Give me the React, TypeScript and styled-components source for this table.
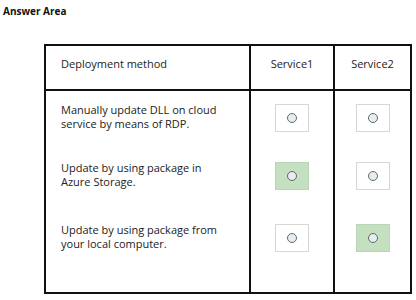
import React from "react";
import styled, { createGlobalStyle } from "styled-components";

const GlobalStyle = createGlobalStyle`
  html, body {
    margin: 0;
    padding: 0;
    background: #ffffff;
  }
  body {
    font-family: "Open Sans", "Liberation Sans", sans-serif;
    color: #222222;
  }
`;

type Choice = { text: string[]; answer: 0 | 1 | 2 };

const rows: Choice[] = [
  { text: ["Manually update DLL on cloud", "service by means of RDP."], answer: 0 },
  { text: ["Update by using package in", "Azure Storage."], answer: 1 },
  { text: ["Update by using package from", "your local computer."], answer: 2 },
];

const rowHeights = [54, 62, 62];

const App: React.FC = () => {
  return (
    <Page>
      <GlobalStyle />
      <Title>Answer Area</Title>
      <Table>
        <Row>
          <HeadCell align="left">Deployment method</HeadCell>
          <HeadCell align="center">Service1</HeadCell>
          <HeadCell align="center" last>
            Service2
          </HeadCell>
        </Row>
        {rows.map((r, i) => {
          const extra = i === rows.length - 1 ? 23 : 0;
          return (
            <Row key={i}>
              <TextCell h={rowHeights[i]} extra={extra}>
                <div>
                  {r.text.map((t, j) => (
                    <Line key={j}>{t}</Line>
                  ))}
                </div>
              </TextCell>
              <BoxCell h={rowHeights[i]} extra={extra}>
                <RadioBox selected={r.answer === 1}>
                  <Dot />
                </RadioBox>
              </BoxCell>
              <BoxCell h={rowHeights[i]} extra={extra} last>
                <RadioBox selected={r.answer === 2}>
                  <Dot />
                </RadioBox>
              </BoxCell>
            </Row>
          );
        })}
      </Table>
    </Page>
  );
};

export default App;

const Page = styled.div`
  width: 416px;
  height: 300px;
  overflow: hidden;
`;

const Title = styled.div`
  height: 44px;
  box-sizing: border-box;
  padding: 4px 0 0 3px;
  font-size: 10px;
  font-weight: 700;
  color: #111111;
  line-height: 14px;
`;

const Table = styled.div`
  margin-left: 44px;
  width: 364px;
  border: 2px solid #111111;
`;

const Row = styled.div`
  display: grid;
  grid-template-columns: 205px 84px 75px;
  &:first-child {
    border-bottom: 2px solid #111111;
  }
`;

const HeadCell = styled.div<{ align: "left" | "center"; last?: boolean }>`
  height: 43px;
  display: flex;
  align-items: center;
  justify-content: ${(p) => (p.align === "left" ? "flex-start" : "center")};
  padding-left: ${(p) => (p.align === "left" ? "15px" : "0")};
  padding-bottom: 8px;
  box-sizing: border-box;
  font-size: 11px;
  color: #222222;
  border-right: ${(p) => (p.last ? "none" : "2px solid #111111")};
`;

const TextCell = styled.div<{ h: number; extra: number }>`
  height: ${(p) => p.h + p.extra}px;
  padding-bottom: ${(p) => p.extra + 2}px;
  box-sizing: border-box;
  display: flex;
  align-items: center;
  padding-left: 15px;
  border-right: 2px solid #111111;
  font-size: 11px;
`;

const Line = styled.div`
  line-height: 14px;
  white-space: nowrap;
`;

const BoxCell = styled.div<{ h: number; extra: number; last?: boolean }>`
  height: ${(p) => p.h + p.extra}px;
  padding-bottom: ${(p) => p.extra}px;
  box-sizing: border-box;
  display: flex;
  align-items: center;
  justify-content: center;
  border-right: ${(p) => (p.last ? "none" : "2px solid #111111")};
`;

const RadioBox = styled.div<{ selected: boolean }>`
  width: 34px;
  height: 28px;
  box-sizing: border-box;
  border: 1px solid ${(p) => (p.selected ? "#b9d6b6" : "#d6d6d6")};
  background: ${(p) => (p.selected ? "#c4e0c1" : "#ffffff")};
  display: flex;
  align-items: center;
  justify-content: center;
`;

const Dot = styled.div`
  width: 10px;
  height: 10px;
  box-sizing: border-box;
  border-radius: 50%;
  border: 1px solid #62676b;
  background: #e6edf1;
`;
